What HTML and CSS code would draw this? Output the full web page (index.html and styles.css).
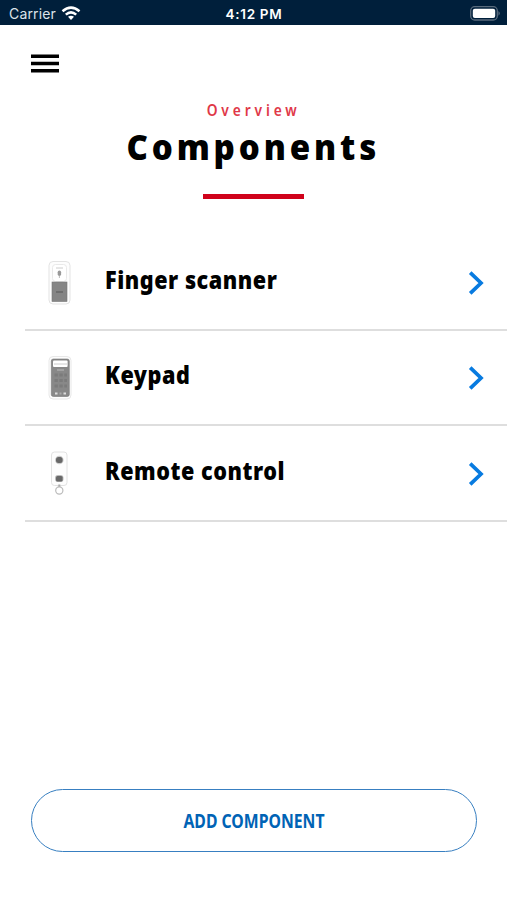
FILE: index.html
```html
<!DOCTYPE html>
<html lang="en">
<head>
<meta charset="utf-8">
<title>Components</title>
<link rel="stylesheet" href="styles.css">
</head>
<body>
<div class="status">
  <div class="carrier"><span>Carrier</span>
    <svg width="20" height="15" viewBox="0 0 20 15" fill="none" stroke="#fff" stroke-width="2.5"><path d="M1.5 5.3Q10-2.1 18.500 5.300M4.800 8.600Q10 4.100 15.200 8.600"/><path d="M7 10.800Q10 8.600 13 10.800L10 14Z" fill="#fff" stroke="none"/></svg>
  </div>
  <span class="time">4:12 PM</span>
  <svg class="battery" width="31" height="15" viewBox="0 0 31 15"><rect x=".7" y=".7" width="26.600" height="13.300" rx="4" fill="none" stroke="#596b7d" stroke-width="1.300"/><rect x="2.800" y="2.700" width="22.400" height="9.300" rx="2" fill="#fff"/><path d="M28.500 5Q31 7.300 28.500 9.700Z" fill="#667788"/></svg>
</div>
<header class="top">
  <svg class="menu" width="28" height="20" viewBox="0 0 28 20"><path d="M0 2.300H28M0 9.500H28M0 16.700H28" stroke="#000" stroke-width="3.600"/></svg>
  <p class="eyebrow"><span>Overview</span></p>
  <h1><span>Components</span></h1>
  <div class="rule"></div>
</header>
<main class="list">
  <div class="row">
    <svg class="device" width="24" height="46" viewBox="0 0 24 46"><rect x="1" y="1.500" width="21" height="42.500" rx="4" fill="#fdfdfd" stroke="#e3e3e3"/><rect x="4.500" y="4.500" width="14" height="17" rx="3" fill="#fff" stroke="#e9e9e9"/><path d="M8 8H15" stroke="#ccc"/><rect x="9.700" y="10.500" width="3.400" height="5.500" rx="1.700" fill="#999"/><path d="M11.400 16V18" stroke="#bbb"/><rect x="4" y="22" width="15" height="19.500" fill="#858585" stroke="#777" stroke-width=".6"/><path d="M8 32H15" stroke="#666" stroke-width="1.500"/></svg>
    <span class="name">Finger scanner</span>
    <svg class="chevron" width="16" height="26" viewBox="0 0 16 26"><path d="M2.200 2.700 13 13 2.200 23.300" fill="none" stroke="#087be0" stroke-width="3.700"/></svg>
  </div>
  <div class="row">
    <svg class="device" width="24" height="46" viewBox="0 0 24 46"><rect x="1" y="1.500" width="22" height="42.500" rx="4" fill="#fdfdfd" stroke="#e8e8e8"/><rect x="3.300" y="4" width="18" height="37.500" rx="2" fill="#888" stroke="#777" stroke-width=".6"/><rect x="5" y="5.500" width="14.600" height="6.500" rx="1" fill="#fff"/><path d="M6 9H19" stroke="#ccc"/><path d="M9 15H16" stroke="#aaa" stroke-width="1.500"/><path d="M6.500 20H19M6.500 25.500H19M6.500 31H19" stroke="#7b7b7b" stroke-width="3" stroke-dasharray="3.300 1.600"/><path d="M7 38.500H9.500M15.500 38.500H18" stroke="#ddd" stroke-width="2"/><path d="M11.500 38.500H13.500" stroke="#aaa" stroke-width="2"/></svg>
    <span class="name">Keypad</span>
    <svg class="chevron" width="16" height="26" viewBox="0 0 16 26"><path d="M2.200 2.700 13 13 2.200 23.300" fill="none" stroke="#087be0" stroke-width="3.700"/></svg>
  </div>
  <div class="row">
    <svg class="device" width="24" height="46" viewBox="0 0 24 46"><rect x="3.500" y="1" width="15.500" height="33.500" rx="3" fill="#fdfdfd" stroke="#e2e2e2"/><circle cx="11.300" cy="9" r="4.300" fill="#ccc"/><rect x="8" y="6" width="6.600" height="6" rx="2.500" fill="#686868"/><rect x="7" y="24" width="8.500" height="7" rx="3" fill="#bbb"/><rect x="8" y="25" width="6.600" height="5.500" rx="1.500" fill="#686868"/><path d="M11.300 33.500V36.500" stroke="#aaa" stroke-width="2"/><circle cx="11.300" cy="39.500" r="3.600" fill="#fff" stroke="#bbb" stroke-width="1.200"/></svg>
    <span class="name">Remote control</span>
    <svg class="chevron" width="16" height="26" viewBox="0 0 16 26"><path d="M2.200 2.700 13 13 2.200 23.300" fill="none" stroke="#087be0" stroke-width="3.700"/></svg>
  </div>
</main>
<button class="add"><span>ADD COMPONENT</span></button>
</body>
</html>
```
FILE: styles.css
```css
* { box-sizing: border-box; }
body { margin: 0; height: 900px; display: flex; flex-direction: column; background: #fff; font-family: "Noto Sans", sans-serif; color: #000; overflow: hidden; }
svg { display: block; flex: none; }
.status { height: 25px; background: #001f3b; color: #fff; display: grid; grid-template-columns: 1fr auto 1fr; align-items: center; padding: 2px 8px 0 9px; font: 14px/20px Inter, sans-serif; }
.carrier { display: flex; align-items: center; gap: 5px; color: #dce3ea; letter-spacing: .15px; }
.time { font-weight: 600; font-size: 13.5px; letter-spacing: .7px; }
.battery { justify-self: end; margin-right: -2px; }
.top { height: 210px; display: flex; flex-direction: column; align-items: center; }
.menu { align-self: flex-start; margin: 29px 0 0 31px; }
.eyebrow { margin: 26px 0 0; height: 20px; line-height: 20px; font-size: 16px; font-weight: 600; letter-spacing: 4.5px; color: #df3848; }
.eyebrow span { display: inline-block; transform: scaleX(.86); }
h1 { margin: 4px 0 0; height: 46px; line-height: 46px; font-size: 35px; font-weight: 900; letter-spacing: 4.1px; }
h1 span { display: inline-block; transform: scaleX(.945); }
.rule { width: 101px; height: 5px; margin-top: 24px; background: #d0021b; }
.list { margin-left: 25px; }
.row { height: 95.500px; border-bottom: 2px solid #dedede; display: flex; align-items: center; padding: 2px 23px 0 22.5px; }
.name { margin-left: 33.5px; flex: 1; font-size: 24px; line-height: 34px; font-weight: 900; letter-spacing: .6px; transform: translateY(-3px) scaleX(.9); transform-origin: left; white-space: nowrap; }
.add { width: 446px; height: 63px; margin: auto 0 48px 31px; border: 1.500px solid #387fc1; border-radius: 32px; background: #fff; color: #0063b5; font: 700 19px/28px "Noto Sans", sans-serif; padding: 0; white-space: nowrap; }
.add span { display: inline-block; transform: scaleX(.83); }
```
